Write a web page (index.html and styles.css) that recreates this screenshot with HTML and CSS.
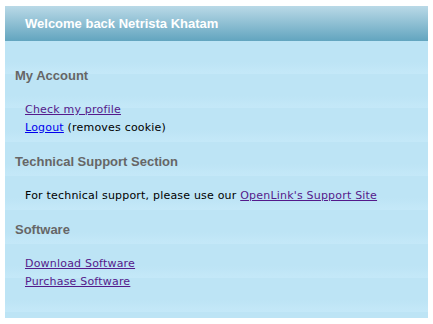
FILE: index.html
```html
<!DOCTYPE html>
<html>
<head>
  <title>Welcome back</title>
  <link rel="stylesheet" href="styles.css">
</head>
<body>
  <div class="panel">
    <h2 class="panel-title">Welcome back Netrista Khatam</h2>
    <div class="panel-body">
      <div class="section">
        <h3>My Account</h3>
        <ul>
          <li><a class="visited" href="#profile">Check my profile</a></li>
          <li><a class="fresh" href="#logout">Logout</a> (removes cookie)</li>
        </ul>
      </div>
      <div class="section">
        <h3>Technical Support Section</h3>
        <p>For technical support, please use our <a class="visited" href="#support">OpenLink's Support Site</a></p>
      </div>
      <div class="section">
        <h3>Software</h3>
        <ul>
          <li><a class="visited" href="#download">Download Software</a></li>
          <li><a class="visited" href="#purchase">Purchase Software</a></li>
        </ul>
      </div>
    </div>
  </div>
</body>
</html>
```

FILE: styles.css
```css
body {
  margin: 0;
  padding: 6px 5px;
  background: white;
  font-family: "DejaVu Sans", Verdana, sans-serif;
  font-size: 11px;
  letter-spacing: 0.2px;
  color: #000;
}

.panel {
  width: 423px;
  background: repeating-linear-gradient(to bottom, #bde4f5 0, #bde4f5 22px, #c4e8f8 33px, #c4e8f8 34px);
}

.panel-title {
  margin: 0;
  height: 35px;
  line-height: 35px;
  padding-left: 20px;
  font-family: "Liberation Sans", Arial, sans-serif;
  font-size: 13px;
  font-weight: bold;
  letter-spacing: 0;
  color: white;
  background: linear-gradient(to bottom, #bad9e7, #62a5bf);
}

.panel-body {
  display: flex;
  flex-direction: column;
  gap: 16px;
  padding: 26px 0 27px;
}

.section h3 {
  margin: 0 0 16px;
  padding-left: 10px;
  line-height: 18px;
  font-family: "Liberation Sans", Arial, sans-serif;
  font-size: 13px;
  font-weight: bold;
  letter-spacing: 0;
  color: #666;
}

.section ul,
.section p {
  margin: 0;
  padding: 0 0 0 20px;
  list-style: none;
  line-height: 18px;
}

a.visited {
  color: #551a8b;
}

a.fresh {
  color: #0000ee;
}
```
